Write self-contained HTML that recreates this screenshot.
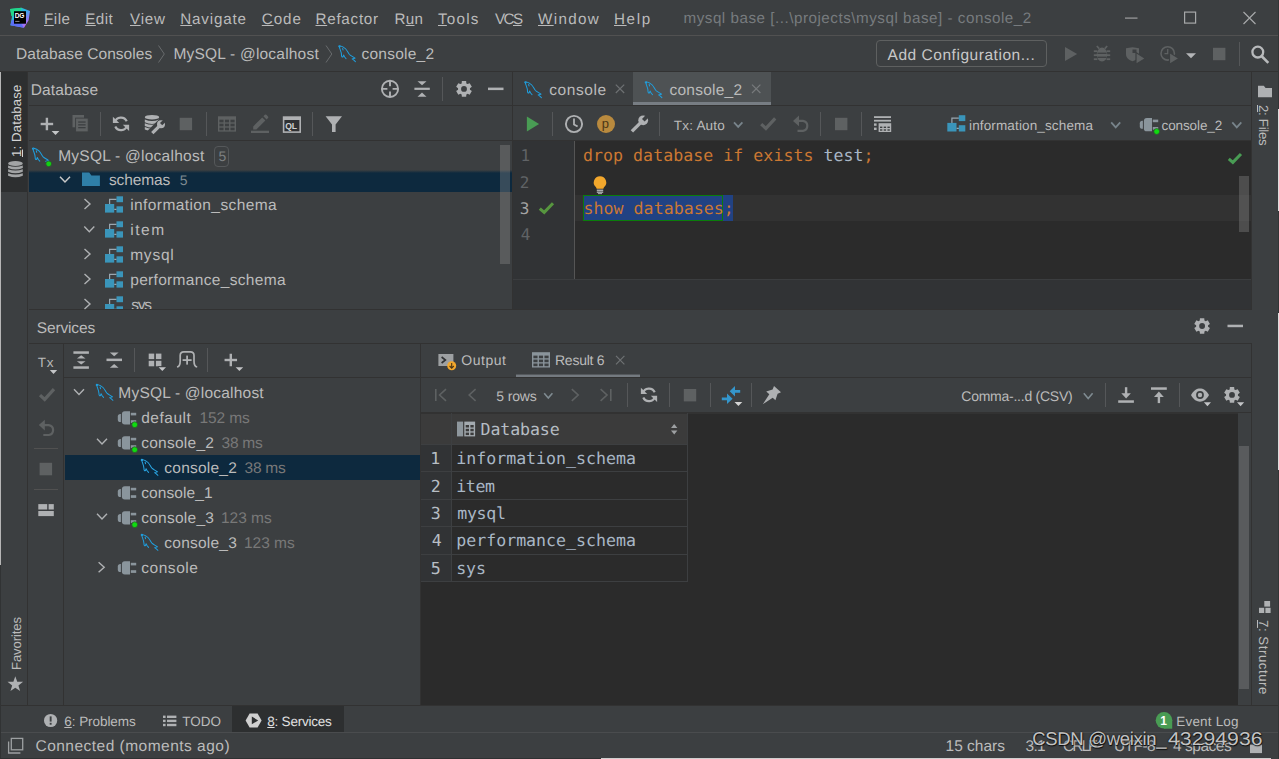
<!DOCTYPE html>
<html lang="en"><head><meta charset="utf-8"><title>mysql base - console_2</title>
<style>
html,body{margin:0;padding:0;background:#3c3f41;overflow:hidden}
#root{position:relative;width:1279px;height:759px;overflow:hidden;background:#3c3f41;font-family:"Liberation Sans", sans-serif;}
.r{position:absolute}
.i{position:absolute;overflow:visible}
.t{position:absolute;white-space:pre;line-height:1;text-rendering:geometricPrecision}
.s{font-family:"Liberation Sans", sans-serif}
.m{font-family:"DejaVu Sans Mono", "Liberation Mono", monospace}
u{text-decoration:underline;text-underline-offset:1px;text-decoration-thickness:1px}
</style></head>
<body><div id="root">
<div class="r" style="left:0px;top:0px;width:1279px;height:35px;background:#3c3f41;"></div>
<div class="r" style="left:0px;top:35px;width:1279px;height:1px;background:#515151;"></div>
<span class="t s" style="left:44.00px;top:12.00px;font-size:15.2px;color:#bbbbbb;letter-spacing:0.49px;"><u>F</u>ile</span>
<span class="t s" style="left:85.20px;top:12.00px;font-size:15.2px;color:#bbbbbb;letter-spacing:0.48px;"><u>E</u>dit</span>
<span class="t s" style="left:130.00px;top:12.00px;font-size:15.2px;color:#bbbbbb;letter-spacing:0.77px;"><u>V</u>iew</span>
<span class="t s" style="left:180.30px;top:12.00px;font-size:15.2px;color:#bbbbbb;letter-spacing:0.81px;"><u>N</u>avigate</span>
<span class="t s" style="left:261.80px;top:12.00px;font-size:15.2px;color:#bbbbbb;letter-spacing:0.91px;"><u>C</u>ode</span>
<span class="t s" style="left:315.50px;top:12.00px;font-size:15.2px;color:#bbbbbb;letter-spacing:0.74px;"><u>R</u>efactor</span>
<span class="t s" style="left:394.50px;top:12.00px;font-size:15.2px;color:#bbbbbb;letter-spacing:0.29px;">R<u>u</u>n</span>
<span class="t s" style="left:438.00px;top:12.00px;font-size:15.2px;color:#bbbbbb;letter-spacing:1.24px;"><u>T</u>ools</span>
<span class="t s" style="left:495.00px;top:12.00px;font-size:15.2px;color:#bbbbbb;letter-spacing:-1.55px;">VC<u>S</u></span>
<span class="t s" style="left:538.00px;top:12.00px;font-size:15.2px;color:#bbbbbb;letter-spacing:1.33px;"><u>W</u>indow</span>
<span class="t s" style="left:614.00px;top:12.00px;font-size:15.2px;color:#bbbbbb;letter-spacing:1.64px;"><u>H</u>elp</span>
<span class="t s" style="left:683.50px;top:11.00px;font-size:15.2px;color:#777b7e;letter-spacing:0.52px;">mysql base [...\projects\mysql base] - console_2</span>
<div class="r" style="left:0px;top:36px;width:1279px;height:35px;background:#3c3f41;"></div>
<div class="r" style="left:0px;top:71px;width:1279px;height:1px;background:#323232;"></div>
<span class="t s" style="left:16.00px;top:47.00px;font-size:15.5px;color:#bbbbbb;letter-spacing:0.06px;">Database Consoles</span>
<span class="t s" style="left:173.50px;top:47.00px;font-size:15.5px;color:#bbbbbb;letter-spacing:0.2px;">MySQL - @localhost</span>
<span class="t s" style="left:361.50px;top:47.00px;font-size:15.5px;color:#bbbbbb;letter-spacing:0.24px;">console_2</span>
<div class="r" style="left:876px;top:40px;width:169px;height:25px;border:1px solid #5e6060;border-radius:4px;background:#3c3f41"></div>
<span class="t s" style="left:887.50px;top:48.00px;font-size:15.5px;color:#c8c8c8;letter-spacing:0.54px;">Add Configuration...</span>
<div class="r" style="left:0px;top:72px;width:28px;height:661px;background:#3c3f41;"></div>
<div class="r" style="left:27px;top:72px;width:1px;height:634px;background:#323232;"></div>
<div class="r" style="left:1px;top:72px;width:26px;height:120px;background:#2d2f30;"></div>
<span class="t s" style="left:19.50px;top:144.50px;font-size:13.2px;color:#d4d4d4;letter-spacing:0.12px;transform-origin:1.00px 11.00px;transform:rotate(-90deg);"><u>1</u>: Database</span>
<span class="t s" style="left:19.50px;top:657.50px;font-size:13.2px;color:#bbbbbb;letter-spacing:-0.14px;transform-origin:1.00px 11.00px;transform:rotate(-90deg);">Favorites</span>
<div class="r" style="left:1251px;top:72px;width:1px;height:634px;background:#323232;"></div>
<div class="r" style="left:1252px;top:72px;width:27px;height:634px;background:#3c3f41;"></div>
<span class="t s" style="left:1259.00px;top:94.00px;font-size:13.2px;color:#bbbbbb;letter-spacing:-0.27px;transform-origin:0.00px 11.00px;transform:rotate(90deg);"><u>2</u>: Files</span>
<span class="t s" style="left:1259.00px;top:608.50px;font-size:13.2px;color:#bbbbbb;letter-spacing:0.56px;transform-origin:0.00px 11.00px;transform:rotate(90deg);"><u>7</u>: Structure</span>
<div class="r" style="left:29px;top:72px;width:483px;height:237px;background:#3c3f41;"></div>
<div class="r" style="left:29px;top:105px;width:483px;height:1px;background:#323232;"></div>
<div class="r" style="left:29px;top:140px;width:483px;height:1px;background:#323232;"></div>
<span class="t s" style="left:30.70px;top:83.00px;font-size:15.5px;color:#bbbbbb;letter-spacing:0.15px;">Database</span>
<div class="r" style="left:29px;top:167px;width:483px;height:25px;background:#0d293e;"></div>
<div class="r" style="left:29px;top:141px;width:483px;height:29px;background:#3c3f41"></div>
<div class="r" style="left:29px;top:170px;width:483px;height:3px;background:linear-gradient(#3c3f41,rgba(60,63,65,0))"></div>
<span class="t s" style="left:58.20px;top:149.00px;font-size:15.5px;color:#bbbbbb;letter-spacing:0.25px;">MySQL - @localhost</span>
<div class="r" style="left:214px;top:146px;width:13px;height:19px;border:1px solid #55585a;border-radius:4px"></div>
<span class="t s" style="left:218.50px;top:149.00px;font-size:14px;color:#7d8082;letter-spacing:-1.8px;">5</span>
<span class="t s" style="left:109.00px;top:173.00px;font-size:15.5px;color:#bbbbbb;letter-spacing:-0.13px;">schemas</span>
<span class="t s" style="left:179.70px;top:173.00px;font-size:14px;color:#7f8b91;letter-spacing:-1.7px;">5</span>
<span class="t s" style="left:130.20px;top:198.00px;font-size:15.5px;color:#bbbbbb;letter-spacing:0.41px;">information_schema</span>
<span class="t s" style="left:130.20px;top:223.00px;font-size:15.5px;color:#bbbbbb;letter-spacing:1.58px;">item</span>
<span class="t s" style="left:130.20px;top:248.00px;font-size:15.5px;color:#bbbbbb;letter-spacing:0.77px;">mysql</span>
<span class="t s" style="left:130.20px;top:273.00px;font-size:15.5px;color:#bbbbbb;letter-spacing:0.32px;">performance_schema</span>
<span class="t s" style="left:131.20px;top:298.00px;font-size:15.5px;color:#bbbbbb;letter-spacing:-1.2px;">sys</span>
<div class="r" style="left:29px;top:309px;width:483px;height:1px;background:#4b4e50;"></div>
<div class="r" style="left:500px;top:145px;width:10px;height:119px;background:rgba(166,166,166,0.28);"></div>
<div class="r" style="left:512px;top:72px;width:1px;height:237px;background:#323232;"></div>
<div class="r" style="left:513px;top:72px;width:738px;height:33px;background:#3c3f41;"></div>
<div class="r" style="left:513px;top:105px;width:738px;height:1px;background:#323232;"></div>
<div class="r" style="left:633px;top:72px;width:138px;height:33px;background:#4e5254;"></div>
<div class="r" style="left:633px;top:102px;width:138px;height:3px;background:#777d83;"></div>
<span class="t s" style="left:549.30px;top:83.00px;font-size:15.5px;color:#bbbbbb;letter-spacing:0.57px;">console</span>
<span class="t s" style="left:669.50px;top:83.00px;font-size:15.5px;color:#bbbbbb;letter-spacing:0.24px;">console_2</span>
<div class="r" style="left:513px;top:106px;width:738px;height:34px;background:#3c3f41;"></div>
<div class="r" style="left:513px;top:140px;width:738px;height:1px;background:#323232;"></div>
<span class="t s" style="left:673.80px;top:119.00px;font-size:13.5px;color:#bbbbbb;letter-spacing:0.21px;">Tx: Auto</span>
<span class="t s" style="left:969.00px;top:119.00px;font-size:13.5px;color:#bbbbbb;letter-spacing:0.14px;">information_schema</span>
<span class="t s" style="left:1161.50px;top:119.00px;font-size:13.5px;color:#bbbbbb;letter-spacing:-0.1px;">console_2</span>
<div class="r" style="left:513px;top:141px;width:738px;height:138px;background:#2b2b2b;"></div>
<div class="r" style="left:513px;top:141px;width:61px;height:138px;background:#313335;"></div>
<div class="r" style="left:574px;top:141px;width:1px;height:138px;background:#555555;"></div>
<div class="r" style="left:575px;top:195px;width:676px;height:26px;background:#323232;"></div>
<div class="r" style="left:513px;top:279px;width:738px;height:1px;background:#3b3d3f;"></div>
<div class="r" style="left:513px;top:280px;width:738px;height:29px;background:#313335;"></div>
<div class="r" style="left:29px;top:309px;width:1223px;height:1px;background:#323232;"></div>
<div class="r" style="left:583px;top:195px;width:150px;height:26px;background:#214283;"></div>
<div class="r" style="left:583px;top:195px;width:138px;height:24px;border:1px solid #0a7d0a"></div>
<span class="t m" style="left:583.00px;top:148.00px;font-size:16.6px;color:#cc7832;letter-spacing:0.03px;">drop database if exists <span style="color:#a9b7c6">test</span>;</span>
<span class="t m" style="left:583.50px;top:201.00px;font-size:16.6px;color:#cc7832;letter-spacing:0.03px;">show databases;</span>
<span class="t m" style="left:520.60px;top:148.00px;font-size:16px;color:#606366;letter-spacing:-1.8px;">1</span>
<span class="t m" style="left:519.80px;top:175.00px;font-size:16px;color:#606366;letter-spacing:-0.5px;">2</span>
<span class="t m" style="left:519.80px;top:201.00px;font-size:16px;color:#a4a3a3;letter-spacing:-0.5px;">3</span>
<span class="t m" style="left:520.80px;top:227.00px;font-size:16px;color:#606366;letter-spacing:-1.5px;">4</span>
<div class="r" style="left:1238.5px;top:176px;width:10px;height:56px;background:rgba(166,166,166,0.28);"></div>
<div class="r" style="left:29px;top:310px;width:1223px;height:33px;background:#3c3f41;"></div>
<div class="r" style="left:29px;top:343px;width:1223px;height:1px;background:#323232;"></div>
<span class="t s" style="left:36.70px;top:321.00px;font-size:15.5px;color:#bbbbbb;letter-spacing:-0.13px;">Services</span>
<div class="r" style="left:63px;top:344px;width:1px;height:362px;background:#323232;"></div>
<div class="r" style="left:64px;top:377px;width:356px;height:1px;background:#323232;"></div>
<div class="r" style="left:420px;top:344px;width:1px;height:362px;background:#323232;"></div>
<div class="r" style="left:65px;top:455px;width:355px;height:25px;background:#0d293e;"></div>
<span class="t s" style="left:118.30px;top:386.00px;font-size:15.5px;color:#bbbbbb;letter-spacing:0.21px;">MySQL - @localhost</span>
<span class="t s" style="left:141.20px;top:411.00px;font-size:15.5px;color:#bbbbbb;letter-spacing:0.51px;">default</span>
<span class="t s" style="left:199.50px;top:411.00px;font-size:15.5px;color:#787878;letter-spacing:-0.12px;">152 ms</span>
<span class="t s" style="left:141.20px;top:436.00px;font-size:15.5px;color:#bbbbbb;letter-spacing:0.26px;">console_2</span>
<span class="t s" style="left:221.50px;top:436.00px;font-size:15.5px;color:#787878;letter-spacing:-0.24px;">38 ms</span>
<span class="t s" style="left:164.30px;top:461.00px;font-size:15.5px;color:#bbbbbb;letter-spacing:0.23px;">console_2</span>
<span class="t s" style="left:244.50px;top:461.00px;font-size:15.5px;color:#787878;letter-spacing:-0.24px;">38 ms</span>
<span class="t s" style="left:141.20px;top:486.00px;font-size:15.5px;color:#bbbbbb;letter-spacing:0.09px;">console_1</span>
<span class="t s" style="left:141.20px;top:511.00px;font-size:15.5px;color:#bbbbbb;letter-spacing:0.26px;">console_3</span>
<span class="t s" style="left:221.00px;top:511.00px;font-size:15.5px;color:#787878;letter-spacing:-0.02px;">123 ms</span>
<span class="t s" style="left:164.30px;top:536.00px;font-size:15.5px;color:#bbbbbb;letter-spacing:0.23px;">console_3</span>
<span class="t s" style="left:244.00px;top:536.00px;font-size:15.5px;color:#787878;letter-spacing:-0.02px;">123 ms</span>
<span class="t s" style="left:141.20px;top:561.00px;font-size:15.5px;color:#bbbbbb;letter-spacing:0.55px;">console</span>
<span class="t s" style="left:37.80px;top:356.00px;font-size:13.5px;color:#bbbbbb;letter-spacing:0.75px;">Tx</span>
<div class="r" style="left:34px;top:448px;width:24px;height:1px;background:#515151;"></div>
<div class="r" style="left:34px;top:489px;width:24px;height:1px;background:#515151;"></div>
<div class="r" style="left:421px;top:377px;width:831px;height:1px;background:#323232;"></div>
<div class="r" style="left:516px;top:375px;width:124px;height:2px;background:#747a80;"></div>
<div class="r" style="left:516px;top:374px;width:124px;height:1px;background:rgba(116,122,128,0.45);"></div>
<span class="t s" style="left:461.30px;top:353.00px;font-size:14px;color:#bbbbbb;letter-spacing:0.51px;">Output</span>
<span class="t s" style="left:555.00px;top:353.00px;font-size:14px;color:#bbbbbb;letter-spacing:-0.25px;">Result 6</span>
<div class="r" style="left:421px;top:412px;width:831px;height:2px;background:#323232;"></div>
<span class="t s" style="left:496.30px;top:389.00px;font-size:14px;color:#bbbbbb;letter-spacing:-0.15px;">5 rows</span>
<span class="t s" style="left:961.30px;top:389.00px;font-size:14px;color:#bbbbbb;letter-spacing:-0.25px;">Comma-...d (CSV)</span>
<div class="r" style="left:627px;top:383px;width:1px;height:24px;background:#555759;"></div>
<div class="r" style="left:669px;top:383px;width:1px;height:24px;background:#555759;"></div>
<div class="r" style="left:710px;top:383px;width:1px;height:24px;background:#555759;"></div>
<div class="r" style="left:751px;top:383px;width:1px;height:24px;background:#555759;"></div>
<div class="r" style="left:1105px;top:383px;width:1px;height:24px;background:#555759;"></div>
<div class="r" style="left:1179px;top:383px;width:1px;height:24px;background:#555759;"></div>
<div class="r" style="left:421px;top:414px;width:817px;height:292px;background:#2b2b2b;"></div>
<div class="r" style="left:421px;top:414px;width:267px;height:30px;background:#3b3b3b;"></div>
<div class="r" style="left:421px;top:444px;width:31px;height:137px;background:#313335;"></div>
<div class="r" style="left:421px;top:444px;width:267px;height:1px;background:#3d3f41;"></div>
<div class="r" style="left:421px;top:471px;width:267px;height:1px;background:#3d3f41;"></div>
<div class="r" style="left:421px;top:499px;width:267px;height:1px;background:#3d3f41;"></div>
<div class="r" style="left:421px;top:526px;width:267px;height:1px;background:#3d3f41;"></div>
<div class="r" style="left:421px;top:554px;width:267px;height:1px;background:#3d3f41;"></div>
<div class="r" style="left:421px;top:581px;width:267px;height:1px;background:#3d3f41;"></div>
<div class="r" style="left:451px;top:413px;width:1px;height:169px;background:#3d3f41;"></div>
<div class="r" style="left:687px;top:413px;width:1px;height:169px;background:#3d3f41;"></div>
<span class="t m" style="left:480.60px;top:422.00px;font-size:16.6px;color:#b6bdc4;letter-spacing:-0.12px;">Database</span>
<span class="t m" style="left:456.20px;top:451.00px;font-size:16.6px;color:#a9b7c6;letter-spacing:-0.0px;">information_schema</span>
<span class="t m" style="left:430.30px;top:451.00px;font-size:16.6px;color:#b8bec4;letter-spacing:0.2px;">1</span>
<span class="t m" style="left:456.20px;top:479.00px;font-size:16.6px;color:#a9b7c6;letter-spacing:-0.39px;">item</span>
<span class="t m" style="left:430.80px;top:479.00px;font-size:16.6px;color:#b8bec4;letter-spacing:0.0px;">2</span>
<span class="t m" style="left:457.20px;top:506.00px;font-size:16.6px;color:#a9b7c6;letter-spacing:-0.29px;">mysql</span>
<span class="t m" style="left:430.80px;top:506.00px;font-size:16.6px;color:#b8bec4;letter-spacing:0.0px;">3</span>
<span class="t m" style="left:456.20px;top:533.00px;font-size:16.6px;color:#a9b7c6;letter-spacing:-0.0px;">performance_schema</span>
<span class="t m" style="left:431.80px;top:533.00px;font-size:16.6px;color:#b8bec4;letter-spacing:-2.0px;">4</span>
<span class="t m" style="left:456.20px;top:561.00px;font-size:16.6px;color:#a9b7c6;letter-spacing:-0.09px;">sys</span>
<span class="t m" style="left:430.80px;top:561.00px;font-size:16.6px;color:#b8bec4;letter-spacing:0.0px;">5</span>
<div class="r" style="left:1238px;top:413px;width:13px;height:293px;background:#3c3f41;"></div>
<div class="r" style="left:1239px;top:446px;width:10px;height:243px;background:#595b5d;"></div>
<div class="r" style="left:0px;top:705px;width:1279px;height:1px;background:#323232;"></div>
<div class="r" style="left:0px;top:706px;width:1279px;height:26px;background:#3c3f41;"></div>
<div class="r" style="left:232px;top:706px;width:112px;height:26px;background:#2d2f30;"></div>
<span class="t s" style="left:64.30px;top:715.00px;font-size:13.5px;color:#bbbbbb;letter-spacing:-0.06px;"><u>6</u>: Problems</span>
<span class="t s" style="left:182.30px;top:715.00px;font-size:13.5px;color:#bbbbbb;letter-spacing:-0.02px;">TODO</span>
<span class="t s" style="left:267.30px;top:715.00px;font-size:13.5px;color:#e0e0e0;letter-spacing:-0.23px;"><u>8</u>: Services</span>
<span class="t s" style="left:1176.30px;top:715.00px;font-size:13.5px;color:#bbbbbb;letter-spacing:0.18px;">Event Log</span>
<div class="r" style="left:0px;top:732px;width:1279px;height:1px;background:#4a4c4e;"></div>
<div class="r" style="left:0px;top:733px;width:1279px;height:26px;background:#3c3f41;"></div>
<span class="t s" style="left:35.50px;top:739.00px;font-size:15.5px;color:#bbbbbb;letter-spacing:0.48px;">Connected (moments ago)</span>
<span class="t s" style="left:945.50px;top:739.00px;font-size:15.5px;color:#bbbbbb;letter-spacing:0.01px;">15 chars</span>
<span class="t s" style="left:1025.50px;top:739.00px;font-size:15.5px;color:#bbbbbb;letter-spacing:-0.71px;">3:1</span>
<span class="t s" style="left:1063.00px;top:739.00px;font-size:15.5px;color:#bbbbbb;letter-spacing:-2.0px;">CRLF</span>
<span class="t s" style="left:1114.00px;top:739.00px;font-size:15.5px;color:#bbbbbb;letter-spacing:-0.57px;">UTF-8</span>
<span class="t s" style="left:1173.00px;top:739.00px;font-size:15.5px;color:#bbbbbb;letter-spacing:-0.47px;">4 spaces</span>
<svg class="i" style="left:0;top:0" width="1279" height="759" viewBox="0 0 1279 759"><g transform="translate(10 7.7)">
<defs><linearGradient id="dg1" x1="0" y1="0" x2="1" y2="1"><stop offset="0" stop-color="#21d789"/><stop offset="0.45" stop-color="#2bb4e8"/><stop offset="0.75" stop-color="#9775f8"/><stop offset="1" stop-color="#ff59e6"/></linearGradient></defs>
<path d="M0 1.2L11.5 0L20 3.4L18.6 12.5L14 20L0.4 17.6L2 9Z" fill="url(#dg1)"/>
<path d="M0.4 17.6L14 20L10 14L2 12Z" fill="#5c6ef5"/>
<path d="M0 1.2L11.5 0L9 6L1.5 8.5Z" fill="#21d789"/>
<rect x="4" y="3.5" width="12" height="12.5" fill="#000"/>
<rect x="5.2" y="13.2" width="4.3" height="0.9" fill="#9a9a9a"/>
<text x="4.8" y="10.3" font-family="Liberation Sans, sans-serif" font-weight="700" font-size="6.6" fill="#fff" letter-spacing="-0.2">DG</text>
</g>
<rect x="1125" y="17.5" width="12.5" height="1.2" fill="#9d9fa0"/>
<rect x="1184.6" y="12.1" width="11" height="11" fill="none" stroke="#a6a8a9" stroke-width="1.2"/>
<path d="M1243.5 12L1255.5 24M1255.5 12L1243.5 24" fill="none" stroke="#a6a8a9" stroke-width="1.2" stroke-linecap="butt" stroke-linejoin="miter"/>
<path d="M158.5 45.5L164.3 54L158.5 62.5" fill="none" stroke="#686b6d" stroke-width="1" stroke-linecap="butt" stroke-linejoin="miter"/>
<path d="M326 45.5L331.8 54L326 62.5" fill="none" stroke="#686b6d" stroke-width="1" stroke-linecap="butt" stroke-linejoin="miter"/>
<g transform="translate(338.5 45.099999999999994) scale(1)"><path d="M1.2 0.6C0.3 0.4-0.2 1.3 0.6 1.9C1.6 2.4 2.2 1.4 1.2 0.6C3.4 1.2 5.6 2.3 7.3 4C9.2 6 10 8.6 11.4 10.2C13 11.9 15.2 12.4 17.2 14.2L14.2 15L16 16.4L17.6 18M0.8 2C1.5 4.6 3.2 7.8 3.1 10.6C3 12.6 3.8 13.4 4.6 12.9L5.3 10.8L6.4 13L7.9 14.8M4.3 3.6L4.7 5.3" fill="none" stroke="#1fa0e0" stroke-width="1.05" stroke-linejoin="round" stroke-linecap="round" transform="scale(0.96 0.92)"/></g>
<path d="M1065 46.9V61L1077.2 54Z" fill="#5e6162" />
<ellipse cx="1102" cy="54.6" rx="5.3" ry="7" fill="#5e6162"/>
<path d="M1099.2 48.6L1096.8 46M1104.8 48.6L1107.2 46" fill="none" stroke="#5e6162" stroke-width="1.7" stroke-linecap="butt" stroke-linejoin="miter"/>
<rect x="1093.8" y="50.300000000000004" width="3.6" height="1.8" fill="#5e6162"/>
<rect x="1106.6" y="50.300000000000004" width="3.6" height="1.8" fill="#5e6162"/>
<rect x="1093.8" y="54.300000000000004" width="3.6" height="1.8" fill="#5e6162"/>
<rect x="1106.6" y="54.300000000000004" width="3.6" height="1.8" fill="#5e6162"/>
<rect x="1093.8" y="58.300000000000004" width="3.6" height="1.8" fill="#5e6162"/>
<rect x="1106.6" y="58.300000000000004" width="3.6" height="1.8" fill="#5e6162"/>
<rect x="1097.4" y="52.6" width="9.2" height="1.3" fill="#3c3f41"/>
<rect x="1097.4" y="56.6" width="9.2" height="1.3" fill="#3c3f41"/>
<path d="M1126 48.3L1132.5 47.2L1139 48.3V54C1139 58 1136 60 1132.5 61.2C1129 60 1126 58 1126 54Z" fill="#5e6162" />
<path d="M1132.5 49.5H1136.5V53L1132.5 53Z" fill="#3c3f41" />
<path d="M1136 52.6V64.2L1145.4 58.4Z" fill="#5e6162" stroke="#3c3f41" stroke-width="1.2" />
<circle cx="1167.7" cy="53.4" r="6.7" fill="none" stroke="#5e6162" stroke-width="1.6"/>
<path d="M1167.7 49V53.6H1164.5" fill="none" stroke="#5e6162" stroke-width="1.3" stroke-linecap="butt" stroke-linejoin="miter"/>
<path d="M1169.5 52.6V64.2L1179 58.4Z" fill="#5e6162" stroke="#3c3f41" stroke-width="1.2" />
<path d="M1186 53.2H1196L1191.0 58.2Z" fill="#b4b6b8" />
<rect x="1213" y="47.8" width="12.4" height="12.4" fill="#5e6162"/>
<rect x="1239" y="42" width="1" height="24" fill="#555759"/>
<circle cx="1257.8" cy="52.1" r="5.4" fill="none" stroke="#b8babc" stroke-width="2.3"/>
<path d="M1261.5 56L1268.3 62.8" fill="none" stroke="#b8babc" stroke-width="2.6" stroke-linecap="butt" stroke-linejoin="miter"/>
<ellipse cx="15.45" cy="163.5" rx="7.35" ry="2.5" fill="#a2a4a5"/>
<path d="M8.1 165.4Q15.45 168.0 22.8 165.4V167.9Q15.45 170.9 8.1 167.9Z" fill="#a2a4a5" />
<path d="M8.1 169.3Q15.45 171.9 22.8 169.3V171.8Q15.45 174.8 8.1 171.8Z" fill="#a2a4a5" />
<path d="M8.1 173.2Q15.45 175.79999999999998 22.8 173.2V175.7Q15.45 178.7 8.1 175.7Z" fill="#a2a4a5" />
<path d="M15.30 676.20L17.24 681.73L23.10 681.87L18.44 685.42L20.12 691.03L15.30 687.70L10.48 691.03L12.16 685.42L7.50 681.87L13.36 681.73Z" fill="#afb1b3" />
<path d="M1258 85.8H1263.8L1265.6 88H1272V97.2H1258Z" fill="#afb1b3" />
<rect x="1264.3" y="601" width="5.8" height="5.6" fill="#afb1b3"/>
<rect x="1259" y="607.8" width="5.2" height="5.2" fill="#afb1b3"/>
<rect x="1265.4" y="607.8" width="5.2" height="5.2" fill="#afb1b3"/>
<circle cx="390" cy="88.9" r="8.1" fill="none" stroke="#afb1b3" stroke-width="1.9"/>
<path d="M390 81V86.2M390 91.6V97M382 88.9H387.4M392.6 88.9H398" fill="none" stroke="#afb1b3" stroke-width="1.9" stroke-linecap="butt" stroke-linejoin="miter"/>
<path d="M417.5 81.3H426.5L422 85.3Z" fill="#afb1b3" />
<rect x="414.4" y="87.7" width="15.4" height="2.2" fill="#afb1b3"/>
<path d="M417.5 96.7H426.5L422 92.5Z" fill="#afb1b3" />
<rect x="442" y="77" width="1" height="24" fill="#555759"/>
<path d="M461.67 83.38L461.84 81.09L466.16 81.09L466.33 83.38L467.61 84.12L469.68 83.13L471.84 86.87L469.95 88.16L469.95 89.64L471.84 90.93L469.68 94.67L467.61 93.68L466.33 94.42L466.16 96.71L461.84 96.71L461.67 94.42L460.39 93.68L458.32 94.67L456.16 90.93L458.05 89.64L458.05 88.16L456.16 86.87L458.32 83.13L460.39 84.12ZM466.92 88.9A2.92 2.92 0 1 0 461.08 88.9A2.92 2.92 0 1 0 466.92 88.9Z" fill="#afb1b3" fill-rule="evenodd"/>
<rect x="488" y="87.6" width="15.5" height="2.5" fill="#afb1b3"/>
<rect x="40.65" y="122.8" width="12.5" height="2.4" fill="#afb1b3"/>
<rect x="45.699999999999996" y="117.75" width="2.4" height="12.5" fill="#afb1b3"/>
<path d="M51.6 131H59.4L55.5 135Z" fill="#c3c5c7" />
<rect x="72.5" y="115" width="11.5" height="12.3" fill="#5e6162"/>
<rect x="75.6" y="118.1" width="12.6" height="13.8" fill="#5e6162" stroke="#3c3f41" stroke-width="0.9"/>
<rect x="78.2" y="121.4" width="7.4" height="1.3" fill="#3c3f41"/>
<rect x="78.2" y="124.2" width="7.4" height="1.3" fill="#3c3f41"/>
<rect x="78.2" y="127" width="7.4" height="1.3" fill="#3c3f41"/>
<rect x="100" y="112" width="1" height="24" fill="#555759"/>
<path d="M114.91 122.27A6.3 6.3 0 0 1 126.71 121.24" fill="none" stroke="#afb1b3" stroke-width="2.2" stroke-linecap="butt" stroke-linejoin="miter"/>
<path d="M127.09 125.53A6.3 6.3 0 0 1 115.29 126.56" fill="none" stroke="#afb1b3" stroke-width="2.2" stroke-linecap="butt" stroke-linejoin="miter"/>
<path d="M112.9 116.7v6.3h6.3Z" fill="#afb1b3" />
<path d="M129.1 131.1v-6.3h-6.3Z" fill="#afb1b3" />
<defs><clipPath id="dbclip"><path d="M140 110H159.8V118.6L145.6 132.8H140Z"/></clipPath></defs>
<g clip-path="url(#dbclip)" fill="#afb1b3">
<ellipse cx="152" cy="117.2" rx="7.2" ry="2.3"/>
<path d="M144.8 119.4Q152 122.6 159.2 119.4V122.2Q152 125.6 144.8 122.2Z"/>
<path d="M144.8 123.2Q152 126.4 159.2 123.2V126Q152 129.4 144.8 126Z"/>
<path d="M144.8 127Q152 130.2 159.2 127V129.6Q152 133 144.8 129.6Z"/>
</g>
<path d="M152.3 133.1L159.6 125.8" fill="none" stroke="#afb1b3" stroke-width="3.3" stroke-linecap="butt" stroke-linejoin="miter"/>
<circle cx="161" cy="124.3" r="4" fill="#afb1b3"/>
<rect x="161.2" y="122.7" width="5.4" height="3.2" fill="#3c3f41" transform="rotate(-45 161 124.3)"/>
<rect x="179.7" y="117.8" width="12.4" height="12.4" fill="#5e6162"/>
<rect x="206" y="112" width="1" height="24" fill="#555759"/>
<rect x="218" y="116.3" width="18" height="15.3" fill="#5e6162"/>
<rect x="219.4" y="119.7" width="4.13" height="2.67" fill="#3c3f41"/>
<rect x="224.93" y="119.7" width="4.13" height="2.67" fill="#3c3f41"/>
<rect x="230.47" y="119.7" width="4.13" height="2.67" fill="#3c3f41"/>
<rect x="219.4" y="123.67" width="4.13" height="2.67" fill="#3c3f41"/>
<rect x="224.93" y="123.67" width="4.13" height="2.67" fill="#3c3f41"/>
<rect x="230.47" y="123.67" width="4.13" height="2.67" fill="#3c3f41"/>
<rect x="219.4" y="127.63" width="4.13" height="2.67" fill="#3c3f41"/>
<rect x="224.93" y="127.63" width="4.13" height="2.67" fill="#3c3f41"/>
<rect x="230.47" y="127.63" width="4.13" height="2.67" fill="#3c3f41"/>
<path d="M253.2 129.6V126.4L262.2 117.4L265.4 120.6L256.4 129.6Z" fill="#5e6162" />
<path d="M263.4 116.2L264.8 114.8Q265.6 114 266.4 114.8L268 116.4Q268.8 117.2 268 118L266.6 119.4Z" fill="#5e6162" />
<rect x="251" y="130.7" width="18" height="2.3" fill="#5e6162"/>
<rect x="282.8" y="116.3" width="18.2" height="16.6" fill="#afb1b3"/>
<rect x="284.4" y="120" width="15" height="11.3" fill="#2f3133"/>
<text x="285.3" y="129.4" font-family="Liberation Sans, sans-serif" font-weight="700" font-size="8.6" fill="#d0d2d3" letter-spacing="-0.3">QL</text>
<rect x="312" y="112" width="1" height="24" fill="#555759"/>
<path d="M325.6 116.3H342L335.6 124.4V132H332V124.4Z" fill="#afb1b3" />
<g transform="translate(32.2 147.5) scale(1)"><path d="M1.2 0.6C0.3 0.4-0.2 1.3 0.6 1.9C1.6 2.4 2.2 1.4 1.2 0.6C3.4 1.2 5.6 2.3 7.3 4C9.2 6 10 8.6 11.4 10.2C13 11.9 15.2 12.4 17.2 14.2L14.2 15L16 16.4L17.6 18M0.8 2C1.5 4.6 3.2 7.8 3.1 10.6C3 12.6 3.8 13.4 4.6 12.9L5.3 10.8L6.4 13L7.9 14.8M4.3 3.6L4.7 5.3" fill="none" stroke="#1fa0e0" stroke-width="1.05" stroke-linejoin="round" stroke-linecap="round" transform="scale(0.96 0.92)"/></g>
<circle cx="48.7" cy="163.8" r="2.9" fill="#12d212" stroke="#2f4a31" stroke-width="0.8"/>
<path d="M60 176.8L65.0 182L70 176.8" fill="none" stroke="#c8c8c8" stroke-width="1.5" stroke-linecap="butt" stroke-linejoin="miter"/>
<path d="M82 172.6H89.2L91.4 175.4H99.9V186.1H82Z" fill="#2f7fa8" />
<path d="M109.6 204.10000000000002V199.3H116.6M114.2 209.4H116.6" fill="none" stroke="#9aa7b0" stroke-width="1.2" stroke-linecap="butt" stroke-linejoin="miter"/>
<rect x="105" y="204.0" width="9.2" height="8.6" fill="#3a95ba"/>
<rect x="116.5" y="196.3" width="6.5" height="5.9" fill="#3a95ba"/>
<rect x="116.5" y="206.3" width="6.5" height="6.3" fill="#3a95ba"/>
<path d="M84.5 199.10000000000002L90 204.10000000000002L84.5 209.10000000000002" fill="none" stroke="#afb1b3" stroke-width="1.4" stroke-linecap="butt" stroke-linejoin="miter"/>
<path d="M109.6 229.10000000000002V224.3H116.6M114.2 234.4H116.6" fill="none" stroke="#9aa7b0" stroke-width="1.2" stroke-linecap="butt" stroke-linejoin="miter"/>
<rect x="105" y="229.0" width="9.2" height="8.6" fill="#3a95ba"/>
<rect x="116.5" y="221.3" width="6.5" height="5.9" fill="#3a95ba"/>
<rect x="116.5" y="231.3" width="6.5" height="6.3" fill="#3a95ba"/>
<path d="M84.3 226.6L89.3 231.8L94.3 226.6" fill="none" stroke="#afb1b3" stroke-width="1.4" stroke-linecap="butt" stroke-linejoin="miter"/>
<path d="M109.6 254.10000000000002V249.3H116.6M114.2 259.40000000000003H116.6" fill="none" stroke="#9aa7b0" stroke-width="1.2" stroke-linecap="butt" stroke-linejoin="miter"/>
<rect x="105" y="254.0" width="9.2" height="8.6" fill="#3a95ba"/>
<rect x="116.5" y="246.3" width="6.5" height="5.9" fill="#3a95ba"/>
<rect x="116.5" y="256.3" width="6.5" height="6.3" fill="#3a95ba"/>
<path d="M84.5 249.10000000000002L90 254.10000000000002L84.5 259.1" fill="none" stroke="#afb1b3" stroke-width="1.4" stroke-linecap="butt" stroke-linejoin="miter"/>
<path d="M109.6 279.1V274.3H116.6M114.2 284.40000000000003H116.6" fill="none" stroke="#9aa7b0" stroke-width="1.2" stroke-linecap="butt" stroke-linejoin="miter"/>
<rect x="105" y="279.0" width="9.2" height="8.6" fill="#3a95ba"/>
<rect x="116.5" y="271.3" width="6.5" height="5.9" fill="#3a95ba"/>
<rect x="116.5" y="281.3" width="6.5" height="6.3" fill="#3a95ba"/>
<path d="M84.5 274.1L90 279.1L84.5 284.1" fill="none" stroke="#afb1b3" stroke-width="1.4" stroke-linecap="butt" stroke-linejoin="miter"/>
<path d="M109.6 304.1V299.3H116.6M114.2 309.40000000000003H116.6" fill="none" stroke="#9aa7b0" stroke-width="1.2" stroke-linecap="butt" stroke-linejoin="miter"/>
<rect x="105" y="304.0" width="9.2" height="8.6" fill="#3a95ba"/>
<rect x="116.5" y="296.3" width="6.5" height="5.9" fill="#3a95ba"/>
<rect x="116.5" y="306.3" width="6.5" height="6.3" fill="#3a95ba"/>
<path d="M84.5 299.1L90 304.1L84.5 309.1" fill="none" stroke="#afb1b3" stroke-width="1.4" stroke-linecap="butt" stroke-linejoin="miter"/>
<rect x="100" y="309" width="30" height="1" fill="#323232"/>
<rect x="100" y="310" width="30" height="12" fill="#3c3f41"/>
<g transform="translate(524.5 81.1) scale(1)"><path d="M1.2 0.6C0.3 0.4-0.2 1.3 0.6 1.9C1.6 2.4 2.2 1.4 1.2 0.6C3.4 1.2 5.6 2.3 7.3 4C9.2 6 10 8.6 11.4 10.2C13 11.9 15.2 12.4 17.2 14.2L14.2 15L16 16.4L17.6 18M0.8 2C1.5 4.6 3.2 7.8 3.1 10.6C3 12.6 3.8 13.4 4.6 12.9L5.3 10.8L6.4 13L7.9 14.8M4.3 3.6L4.7 5.3" fill="none" stroke="#1fa0e0" stroke-width="1.05" stroke-linejoin="round" stroke-linecap="round" transform="scale(0.96 0.92)"/></g>
<path d="M615.8 84.6L624.1999999999999 93.0M624.1999999999999 84.6L615.8 93.0" fill="none" stroke="#6e7173" stroke-width="1.2" stroke-linecap="butt" stroke-linejoin="miter"/>
<g transform="translate(645 81.1) scale(1)"><path d="M1.2 0.6C0.3 0.4-0.2 1.3 0.6 1.9C1.6 2.4 2.2 1.4 1.2 0.6C3.4 1.2 5.6 2.3 7.3 4C9.2 6 10 8.6 11.4 10.2C13 11.9 15.2 12.4 17.2 14.2L14.2 15L16 16.4L17.6 18M0.8 2C1.5 4.6 3.2 7.8 3.1 10.6C3 12.6 3.8 13.4 4.6 12.9L5.3 10.8L6.4 13L7.9 14.8M4.3 3.6L4.7 5.3" fill="none" stroke="#1fa0e0" stroke-width="1.05" stroke-linejoin="round" stroke-linecap="round" transform="scale(0.96 0.92)"/></g>
<path d="M752 84.6L760.4 93.0M760.4 84.6L752 93.0" fill="none" stroke="#777a7c" stroke-width="1.2" stroke-linecap="butt" stroke-linejoin="miter"/>
<path d="M526.9 116.6V131.4L539.1 124Z" fill="#499c54" />
<rect x="552" y="112" width="1" height="24" fill="#555759"/>
<circle cx="574" cy="124" r="8.1" fill="none" stroke="#afb1b3" stroke-width="1.9"/>
<path d="M574 118.6V124.4L577.6 126.6" fill="none" stroke="#afb1b3" stroke-width="1.8" stroke-linecap="butt" stroke-linejoin="miter"/>
<circle cx="606" cy="124" r="9" fill="#b98a3e"/>
<text x="601.8" y="128.2" font-family="Liberation Sans, sans-serif" font-size="13" fill="#4b3616">p</text>
<path d="M631.9 131.4L641.2 122.1" fill="none" stroke="#afb1b3" stroke-width="3.4" stroke-linecap="butt" stroke-linejoin="miter"/>
<circle cx="643.2" cy="120.3" r="4.9" fill="#afb1b3"/>
<rect x="643.3" y="118.5" width="6.5" height="3.7" fill="#3c3f41" transform="rotate(-45 643.2 120.3)"/>
<rect x="659" y="112" width="1" height="24" fill="#555759"/>
<path d="M734 122.3L738.2 126.9L742.4 122.3" fill="none" stroke="#78848b" stroke-width="1.8" stroke-linecap="butt" stroke-linejoin="miter"/>
<path d="M761.2 124.15L765.904 128.4L775.1999999999999 118.4" fill="none" stroke="#5e6162" stroke-width="3.2" stroke-linecap="butt" stroke-linejoin="miter"/>
<path d="M795.5 120.89999999999999H803A5 5 0 0 1 803 130.79999999999998H797.5" fill="none" stroke="#5e6162" stroke-width="2.2" stroke-linecap="butt" stroke-linejoin="miter"/>
<path d="M793 120.89999999999999L799 115.6V126.19999999999999Z" fill="#5e6162" />
<rect x="820" y="112" width="1" height="24" fill="#555759"/>
<rect x="835" y="117.8" width="12.4" height="12.4" fill="#5e6162"/>
<rect x="861" y="112" width="1" height="24" fill="#555759"/>
<rect x="874" y="116.2" width="17" height="1.8" fill="#afb1b3"/>
<rect x="874" y="119.8" width="17" height="1.8" fill="#afb1b3"/>
<rect x="874" y="123.4" width="2.6" height="2.4" fill="#afb1b3"/>
<rect x="874" y="127.6" width="2.6" height="2.4" fill="#afb1b3"/>
<rect x="878.6" y="123.2" width="12.6" height="8.8" fill="#afb1b3"/>
<rect x="880.0" y="126.6" width="2.33" height="1.4" fill="#3c3f41"/>
<rect x="883.73" y="126.6" width="2.33" height="1.4" fill="#3c3f41"/>
<rect x="887.47" y="126.6" width="2.33" height="1.4" fill="#3c3f41"/>
<rect x="880.0" y="129.3" width="2.33" height="1.4" fill="#3c3f41"/>
<rect x="883.73" y="129.3" width="2.33" height="1.4" fill="#3c3f41"/>
<rect x="887.47" y="129.3" width="2.33" height="1.4" fill="#3c3f41"/>
<path d="M951.9 123.0V118.2H958.9M956.5 128.3H958.9" fill="none" stroke="#9aa7b0" stroke-width="1.2" stroke-linecap="butt" stroke-linejoin="miter"/>
<rect x="947.3" y="122.9" width="9.2" height="8.6" fill="#3a95ba"/>
<rect x="958.8" y="115.2" width="6.5" height="5.9" fill="#3a95ba"/>
<rect x="958.8" y="125.2" width="6.5" height="6.3" fill="#3a95ba"/>
<path d="M1111.2 122.4L1115.7 127.3L1120.2 122.4" fill="none" stroke="#78848b" stroke-width="1.8" stroke-linecap="butt" stroke-linejoin="miter"/>
<path d="M1142.8999999999999 120.7V128.8H1142.3999999999999Q1139.8 128.8 1139.8 126.2V123.3Q1139.8 120.7 1142.3999999999999 120.7Z" fill="#8a959c" />
<path d="M1152.0 118V131.3H1146.8Q1143.8999999999999 131.3 1143.8999999999999 128.4V120.9Q1143.8999999999999 118 1146.8 118Z" fill="#8a959c" />
<rect x="1152.8" y="119.6" width="5.4" height="2.6" fill="#8a959c"/>
<rect x="1152.8" y="127" width="5.4" height="2.7" fill="#8a959c"/>
<circle cx="1156.7" cy="131.5" r="2.9" fill="#0fdc0f" stroke="#2f4a31" stroke-width="0.7"/>
<path d="M1232.3 122.4L1236.8 127.3L1241.3 122.4" fill="none" stroke="#78848b" stroke-width="1.8" stroke-linecap="butt" stroke-linejoin="miter"/>
<path d="M539.8000000000001 208.51000000000002L544.216 212.4L553.0 203.20000000000002" fill="none" stroke="#57963f" stroke-width="3" stroke-linecap="butt" stroke-linejoin="miter"/>
<path d="M1228.8 158.87L1232.856 162.4L1240.9999999999998 154.0" fill="none" stroke="#499c54" stroke-width="3" stroke-linecap="butt" stroke-linejoin="miter"/>
<path d="M600 176.2A6.2 6.2 0 0 1 604.2 187C603.6 187.6 603.4 188.2 603.4 188.8H596.6C596.6 188.2 596.4 187.6 595.8 187A6.2 6.2 0 0 1 600 176.2Z" fill="#f2a72c" />
<rect x="596.8" y="189.6" width="6.4" height="1.3" fill="#b8babc"/>
<rect x="596.8" y="191.5" width="6.4" height="1.3" fill="#b8babc"/>
<rect x="598" y="193.2" width="4" height="0.9" fill="#b8babc"/>
<path d="M1199.77 320.48L1199.94 318.19L1204.26 318.19L1204.43 320.48L1205.71 321.22L1207.78 320.23L1209.94 323.97L1208.05 325.26L1208.05 326.74L1209.94 328.03L1207.78 331.77L1205.71 330.78L1204.43 331.52L1204.26 333.81L1199.94 333.81L1199.77 331.52L1198.49 330.78L1196.42 331.77L1194.26 328.03L1196.15 326.74L1196.15 325.26L1194.26 323.97L1196.42 320.23L1198.49 321.22ZM1205.02 326A2.92 2.92 0 1 0 1199.18 326A2.92 2.92 0 1 0 1205.02 326Z" fill="#afb1b3" fill-rule="evenodd"/>
<rect x="1227.5" y="324.7" width="15.5" height="2.5" fill="#afb1b3"/>
<path d="M49.8 370H57.2L53.5 374Z" fill="#c3c5c7" />
<path d="M40.0 395.06L44.70399999999999 399.4L53.99999999999999 389.2" fill="none" stroke="#5e6162" stroke-width="3.2" stroke-linecap="butt" stroke-linejoin="miter"/>
<path d="M41.3 425.1H48.8A5 5 0 0 1 48.8 435.0H43.3" fill="none" stroke="#5e6162" stroke-width="2.2" stroke-linecap="butt" stroke-linejoin="miter"/>
<path d="M38.8 425.1L44.8 419.8V430.40000000000003Z" fill="#5e6162" />
<rect x="39.6" y="462.8" width="12.5" height="12.5" fill="#5e6162"/>
<rect x="38.3" y="504.1" width="8.9" height="5.4" fill="#afb1b3"/>
<rect x="48.6" y="504.1" width="5.2" height="5.4" fill="#afb1b3"/>
<rect x="38.3" y="511" width="15.5" height="5.1" fill="#afb1b3"/>
<rect x="73.4" y="351.3" width="15.5" height="2.5" fill="#afb1b3"/>
<path d="M76.9 358.6H85.5L81.2 355.3Z" fill="#afb1b3" />
<path d="M76.9 361.2H85.5L81.2 364.4Z" fill="#afb1b3" />
<rect x="73.4" y="366.3" width="15.5" height="2.5" fill="#afb1b3"/>
<path d="M109.8 352.4H118.6L114.2 356.2Z" fill="#afb1b3" />
<rect x="106.5" y="358.6" width="15.5" height="2.5" fill="#afb1b3"/>
<path d="M109.8 367.8H118.6L114.2 364Z" fill="#afb1b3" />
<rect x="134" y="348" width="1" height="24" fill="#555759"/>
<rect x="148.7" y="353.6" width="5.5" height="5.5" fill="#afb1b3"/>
<rect x="155.9" y="353.6" width="5.5" height="5.5" fill="#afb1b3"/>
<rect x="148.7" y="360.8" width="5.5" height="5.5" fill="#afb1b3"/>
<rect x="155.9" y="360.8" width="5.5" height="5.5" fill="#afb1b3"/>
<path d="M157.6 366.2H167L162.3 371.6Z" fill="#3c3f41" />
<path d="M158.6 367.2H166L162.3 371Z" fill="#c3c5c7" />
<path d="M177 367C179.6 366.6 180.2 364.4 180.2 361V355.6Q180.2 351.9 183.8 351.9H190.4Q194 351.9 194 355.6V361C194 364.4 194.6 366.6 197.2 367" fill="none" stroke="#afb1b3" stroke-width="1.7" stroke-linecap="butt" stroke-linejoin="miter"/>
<rect x="182.6" y="359.2" width="9" height="1.8" fill="#afb1b3"/>
<rect x="186.2" y="355.6" width="1.8" height="9" fill="#afb1b3"/>
<rect x="207" y="348" width="1" height="24" fill="#555759"/>
<rect x="224.55" y="358.8" width="12.5" height="2.4" fill="#afb1b3"/>
<rect x="229.60000000000002" y="353.75" width="2.4" height="12.5" fill="#afb1b3"/>
<path d="M235.6 367.2H243.2L239.39999999999998 371Z" fill="#c3c5c7" />
<path d="M74 389.2L79.0 394.4L84 389.2" fill="none" stroke="#afb1b3" stroke-width="1.4" stroke-linecap="butt" stroke-linejoin="miter"/>
<g transform="translate(96 383.8) scale(1)"><path d="M1.2 0.6C0.3 0.4-0.2 1.3 0.6 1.9C1.6 2.4 2.2 1.4 1.2 0.6C3.4 1.2 5.6 2.3 7.3 4C9.2 6 10 8.6 11.4 10.2C13 11.9 15.2 12.4 17.2 14.2L14.2 15L16 16.4L17.6 18M0.8 2C1.5 4.6 3.2 7.8 3.1 10.6C3 12.6 3.8 13.4 4.6 12.9L5.3 10.8L6.4 13L7.9 14.8M4.3 3.6L4.7 5.3" fill="none" stroke="#1fa0e0" stroke-width="1.05" stroke-linejoin="round" stroke-linecap="round" transform="scale(0.96 0.92)"/></g>
<path d="M120.89999999999999 413.9V422.0H120.39999999999999Q117.8 422.0 117.8 419.4V416.5Q117.8 413.9 120.39999999999999 413.9Z" fill="#8a959c" />
<path d="M130.0 411.2V424.5H124.8Q121.89999999999999 424.5 121.89999999999999 421.59999999999997V414.09999999999997Q121.89999999999999 411.2 124.8 411.2Z" fill="#8a959c" />
<rect x="130.8" y="412.8" width="5.4" height="2.6" fill="#8a959c"/>
<rect x="130.8" y="420.2" width="5.4" height="2.7" fill="#8a959c"/>
<circle cx="134.7" cy="424.7" r="2.9" fill="#0fdc0f" stroke="#2f4a31" stroke-width="0.7"/>
<path d="M97 438.8L102.0 444L107 438.8" fill="none" stroke="#afb1b3" stroke-width="1.4" stroke-linecap="butt" stroke-linejoin="miter"/>
<path d="M120.89999999999999 438.9V447.0H120.39999999999999Q117.8 447.0 117.8 444.4V441.5Q117.8 438.9 120.39999999999999 438.9Z" fill="#8a959c" />
<path d="M130.0 436.2V449.5H124.8Q121.89999999999999 449.5 121.89999999999999 446.59999999999997V439.09999999999997Q121.89999999999999 436.2 124.8 436.2Z" fill="#8a959c" />
<rect x="130.8" y="437.8" width="5.4" height="2.6" fill="#8a959c"/>
<rect x="130.8" y="445.2" width="5.4" height="2.7" fill="#8a959c"/>
<circle cx="134.7" cy="449.7" r="2.9" fill="#0fdc0f" stroke="#2f4a31" stroke-width="0.7"/>
<g transform="translate(141 458.8) scale(1)"><path d="M1.2 0.6C0.3 0.4-0.2 1.3 0.6 1.9C1.6 2.4 2.2 1.4 1.2 0.6C3.4 1.2 5.6 2.3 7.3 4C9.2 6 10 8.6 11.4 10.2C13 11.9 15.2 12.4 17.2 14.2L14.2 15L16 16.4L17.6 18M0.8 2C1.5 4.6 3.2 7.8 3.1 10.6C3 12.6 3.8 13.4 4.6 12.9L5.3 10.8L6.4 13L7.9 14.8M4.3 3.6L4.7 5.3" fill="none" stroke="#2aa7e6" stroke-width="1.05" stroke-linejoin="round" stroke-linecap="round" transform="scale(0.96 0.92)"/></g>
<path d="M120.89999999999999 488.9V497.0H120.39999999999999Q117.8 497.0 117.8 494.4V491.5Q117.8 488.9 120.39999999999999 488.9Z" fill="#8a959c" />
<path d="M130.0 486.2V499.5H124.8Q121.89999999999999 499.5 121.89999999999999 496.59999999999997V489.09999999999997Q121.89999999999999 486.2 124.8 486.2Z" fill="#8a959c" />
<rect x="130.8" y="487.8" width="5.4" height="2.6" fill="#8a959c"/>
<rect x="130.8" y="495.2" width="5.4" height="2.7" fill="#8a959c"/>
<path d="M97 513.8L102.0 519L107 513.8" fill="none" stroke="#afb1b3" stroke-width="1.4" stroke-linecap="butt" stroke-linejoin="miter"/>
<path d="M120.89999999999999 513.9V522.0H120.39999999999999Q117.8 522.0 117.8 519.4V516.5Q117.8 513.9 120.39999999999999 513.9Z" fill="#8a959c" />
<path d="M130.0 511.2V524.5H124.8Q121.89999999999999 524.5 121.89999999999999 521.6V514.1Q121.89999999999999 511.2 124.8 511.2Z" fill="#8a959c" />
<rect x="130.8" y="512.8" width="5.4" height="2.6" fill="#8a959c"/>
<rect x="130.8" y="520.2" width="5.4" height="2.7" fill="#8a959c"/>
<circle cx="134.7" cy="524.7" r="2.9" fill="#0fdc0f" stroke="#2f4a31" stroke-width="0.7"/>
<g transform="translate(141 533.8) scale(1)"><path d="M1.2 0.6C0.3 0.4-0.2 1.3 0.6 1.9C1.6 2.4 2.2 1.4 1.2 0.6C3.4 1.2 5.6 2.3 7.3 4C9.2 6 10 8.6 11.4 10.2C13 11.9 15.2 12.4 17.2 14.2L14.2 15L16 16.4L17.6 18M0.8 2C1.5 4.6 3.2 7.8 3.1 10.6C3 12.6 3.8 13.4 4.6 12.9L5.3 10.8L6.4 13L7.9 14.8M4.3 3.6L4.7 5.3" fill="none" stroke="#1fa0e0" stroke-width="1.05" stroke-linejoin="round" stroke-linecap="round" transform="scale(0.96 0.92)"/></g>
<path d="M98.6 562.3L104.2 567.3L98.6 572.3" fill="none" stroke="#afb1b3" stroke-width="1.4" stroke-linecap="butt" stroke-linejoin="miter"/>
<path d="M120.89999999999999 563.9000000000001V572.0H120.39999999999999Q117.8 572.0 117.8 569.4000000000001V566.5Q117.8 563.9000000000001 120.39999999999999 563.9000000000001Z" fill="#8a959c" />
<path d="M130.0 561.2V574.5H124.8Q121.89999999999999 574.5 121.89999999999999 571.6V564.1Q121.89999999999999 561.2 124.8 561.2Z" fill="#8a959c" />
<rect x="130.8" y="562.8000000000001" width="5.4" height="2.6" fill="#8a959c"/>
<rect x="130.8" y="570.2" width="5.4" height="2.7" fill="#8a959c"/>
<rect x="438.4" y="354" width="15" height="12" fill="#9da0a2"/>
<path d="M441.6 357L445.4 360L441.6 363" fill="none" stroke="#2f3133" stroke-width="1.6" stroke-linecap="butt" stroke-linejoin="miter"/>
<circle cx="451.7" cy="365.8" r="4.5" fill="#f2a72c"/>
<path d="M451.7 363V368M449.6 366L451.7 368.2L453.8 366" fill="none" stroke="#4b3616" stroke-width="1.1" stroke-linecap="butt" stroke-linejoin="miter"/>
<rect x="532" y="352.2" width="18" height="15.3" fill="#8a949b"/>
<rect x="533.4" y="355.6" width="4.13" height="2.67" fill="#3c3f41"/>
<rect x="538.93" y="355.6" width="4.13" height="2.67" fill="#3c3f41"/>
<rect x="544.47" y="355.6" width="4.13" height="2.67" fill="#3c3f41"/>
<rect x="533.4" y="359.57" width="4.13" height="2.67" fill="#3c3f41"/>
<rect x="538.93" y="359.57" width="4.13" height="2.67" fill="#3c3f41"/>
<rect x="544.47" y="359.57" width="4.13" height="2.67" fill="#3c3f41"/>
<rect x="533.4" y="363.53" width="4.13" height="2.67" fill="#3c3f41"/>
<rect x="538.93" y="363.53" width="4.13" height="2.67" fill="#3c3f41"/>
<rect x="544.47" y="363.53" width="4.13" height="2.67" fill="#3c3f41"/>
<path d="M616 355.9L624.4 364.29999999999995M624.4 355.9L616 364.29999999999995" fill="none" stroke="#6e7173" stroke-width="1.2" stroke-linecap="butt" stroke-linejoin="miter"/>
<rect x="435" y="389" width="1.6" height="12" fill="#5e6162"/>
<path d="M446 389.2L439.6 395L446 400.8" fill="none" stroke="#5e6162" stroke-width="1.6" stroke-linecap="butt" stroke-linejoin="miter"/>
<path d="M475.6 389.2L469.2 395L475.6 400.8" fill="none" stroke="#5e6162" stroke-width="1.6" stroke-linecap="butt" stroke-linejoin="miter"/>
<path d="M544.2 393.2L548.3 398L552.4 393.2" fill="none" stroke="#7f8b91" stroke-width="1.6" stroke-linecap="butt" stroke-linejoin="miter"/>
<path d="M571.8 389.2L578.2 395L571.8 400.8" fill="none" stroke="#5e6162" stroke-width="1.6" stroke-linecap="butt" stroke-linejoin="miter"/>
<path d="M600.6 389.2L607 395L600.6 400.8" fill="none" stroke="#5e6162" stroke-width="1.6" stroke-linecap="butt" stroke-linejoin="miter"/>
<rect x="610" y="389" width="1.6" height="12" fill="#5e6162"/>
<path d="M642.91 393.27A6.3 6.3 0 0 1 654.71 392.24" fill="none" stroke="#afb1b3" stroke-width="2.2" stroke-linecap="butt" stroke-linejoin="miter"/>
<path d="M655.09 396.53A6.3 6.3 0 0 1 643.29 397.56" fill="none" stroke="#afb1b3" stroke-width="2.2" stroke-linecap="butt" stroke-linejoin="miter"/>
<path d="M640.9 387.7v6.3h6.3Z" fill="#afb1b3" />
<path d="M657.1 402.09999999999997v-6.3h-6.3Z" fill="#afb1b3" />
<rect x="683.8" y="389" width="12.4" height="12.4" fill="#5e6162"/>
<path d="M729.7 391.3L735 386V390H740.2V392.8H735V396.4Z" fill="#3496cc" />
<path d="M732.6 398.8L727 393.6V397.4H721.8V400.2H727V404Z" fill="#3496cc" />
<path d="M734.5 402H742.3L738.4 406Z" fill="#d4d4d4" />
<path d="M774 386L781 392.3L777.6 393.8L775.4 400.3L772.7 397.7L762.8 404.3L769.3 394.3L766.2 391.6L772.6 389.4Z" fill="#afb1b3" />
<path d="M1083.8 393.2L1088.1999999999998 398.4L1092.6 393.2" fill="none" stroke="#7f8b91" stroke-width="1.6" stroke-linecap="butt" stroke-linejoin="miter"/>
<rect x="1124.9" y="387.2" width="2.4" height="8" fill="#afb1b3"/>
<path d="M1121.3 393.2H1130.9L1126.1 398.4Z" fill="#afb1b3" />
<rect x="1118.2" y="400.3" width="15.7" height="2.5" fill="#afb1b3"/>
<rect x="1151" y="387.3" width="15.8" height="2.5" fill="#afb1b3"/>
<rect x="1157.7" y="394.5" width="2.4" height="8.6" fill="#afb1b3"/>
<path d="M1154 397H1163.8L1158.9 391.6Z" fill="#afb1b3" />
<path d="M1191 395C1193.6 390.4 1196.8 388.5 1200 388.5S1206.4 390.4 1209 395C1206.4 399.8 1203.2 401.7 1200 401.7S1193.6 399.8 1191 395Z" fill="#afb1b3" />
<circle cx="1200" cy="395" r="3.9" fill="#3c3f41"/>
<circle cx="1200" cy="395" r="2.2" fill="#afb1b3"/>
<path d="M1203.9 402.2H1211L1207.45 406.2Z" fill="#c3c5c7" />
<path d="M1229.67 389.38L1229.84 387.09L1234.16 387.09L1234.33 389.38L1235.61 390.12L1237.68 389.13L1239.84 392.87L1237.95 394.16L1237.95 395.64L1239.84 396.93L1237.68 400.67L1235.61 399.68L1234.33 400.42L1234.16 402.71L1229.84 402.71L1229.67 400.42L1228.39 399.68L1226.32 400.67L1224.16 396.93L1226.05 395.64L1226.05 394.16L1224.16 392.87L1226.32 389.13L1228.39 390.12ZM1234.92 394.9A2.92 2.92 0 1 0 1229.08 394.9A2.92 2.92 0 1 0 1234.92 394.9Z" fill="#afb1b3" fill-rule="evenodd"/>
<path d="M1236 401.2H1245L1240.5 407Z" fill="#3c3f41" />
<path d="M1237 402.2H1244.2L1240.6 406.2Z" fill="#c3c5c7" />
<rect x="457" y="421.6" width="6.1" height="14.8" fill="#8e979d"/>
<rect x="464.3" y="421.6" width="10.8" height="14.8" fill="#a4abb0"/>
<rect x="465.7" y="425.0" width="3.3" height="2.5" fill="#3b3b3b"/>
<rect x="470.4" y="425.0" width="3.3" height="2.5" fill="#3b3b3b"/>
<rect x="465.7" y="428.8" width="3.3" height="2.5" fill="#3b3b3b"/>
<rect x="470.4" y="428.8" width="3.3" height="2.5" fill="#3b3b3b"/>
<rect x="465.7" y="432.6" width="3.3" height="2.5" fill="#3b3b3b"/>
<rect x="470.4" y="432.6" width="3.3" height="2.5" fill="#3b3b3b"/>
<path d="M671 428L674.2 424L677.4 428Z" fill="#9da0a2" />
<path d="M671 430.6L674.2 434.6L677.4 430.6Z" fill="#9da0a2" />
<circle cx="50.6" cy="720.5" r="6.6" fill="#afb1b3"/>
<rect x="49.7" y="716.4" width="1.9" height="5.2" fill="#3c3f41"/>
<rect x="49.7" y="722.8" width="1.9" height="1.9" fill="#3c3f41"/>
<rect x="163" y="715.6" width="2.6" height="2.4" fill="#afb1b3"/>
<rect x="167" y="715.6" width="9.4" height="2.4" fill="#afb1b3"/>
<rect x="163" y="719.7" width="2.6" height="2.4" fill="#afb1b3"/>
<rect x="167" y="719.7" width="9.4" height="2.4" fill="#afb1b3"/>
<rect x="163" y="723.8" width="2.6" height="2.4" fill="#afb1b3"/>
<rect x="167" y="723.8" width="9.4" height="2.4" fill="#afb1b3"/>
<path d="M249.6 713.4H257.6L261.6 720.4L257.6 727.4H249.6L245.6 720.4Z" fill="#d0d0d0" />
<path d="M251.8 716.6V724.2L258.2 720.4Z" fill="#2d2f30" />
<circle cx="1164" cy="720.3" r="8.3" fill="#499c54"/>
<rect x="1164" y="720.3" width="8.2" height="8.4" fill="#499c54"/>
<text x="1160.3" y="724.8" font-family="Liberation Sans, sans-serif" font-weight="700" font-size="12" fill="#ffffff">1</text>
<rect x="11.3" y="738.4" width="11.4" height="11.4" fill="none" stroke="#9da0a2" stroke-width="1.3"/>
<path d="M8.6 741.4V753H20.4" fill="none" stroke="#9da0a2" stroke-width="1.3" stroke-linecap="butt" stroke-linejoin="miter"/>
<rect x="1250" y="744.6" width="12" height="8.5" fill="#afb1b3"/></svg>
<div class="r" style="left:0px;top:72px;width:1px;height:493px;background:#b6b6b6;"></div>
<div class="r" style="left:0px;top:565px;width:1px;height:194px;background:#313334;"></div>
<div class="r" style="left:1278px;top:0px;width:1px;height:759px;background:#333536;"></div>
<div class="r" style="left:1277.5px;top:109px;width:1.5px;height:102px;background:#dcdcdc;"></div>
<div class="r" style="left:1277.5px;top:313px;width:1.5px;height:157px;background:#dcdcdc;"></div>
<div class="r" style="left:0px;top:758px;width:601px;height:1px;background:#2f3132;"></div>
<div class="r" style="left:601px;top:758px;width:670px;height:1px;background:#cfcfcf;"></div>
<span class="t s" style="left:1032.20px;top:730.00px;font-size:18.5px;color:rgba(228,228,228,0.86);letter-spacing:-0.31px;text-shadow:0 0 1.5px rgba(0,0,0,0.9),0.5px 0.5px 1px rgba(0,0,0,0.8);">CSDN @weixin_</span>
<span class="t s" style="left:1168.20px;top:730.00px;font-size:18.5px;color:rgba(228,228,228,0.86);letter-spacing:0px;text-shadow:0 0 1.5px rgba(0,0,0,0.9),0.5px 0.5px 1px rgba(0,0,0,0.8);transform-origin:0.00px 50%;transform:scaleX(1.1485);">43294936</span>
</div></body></html>
